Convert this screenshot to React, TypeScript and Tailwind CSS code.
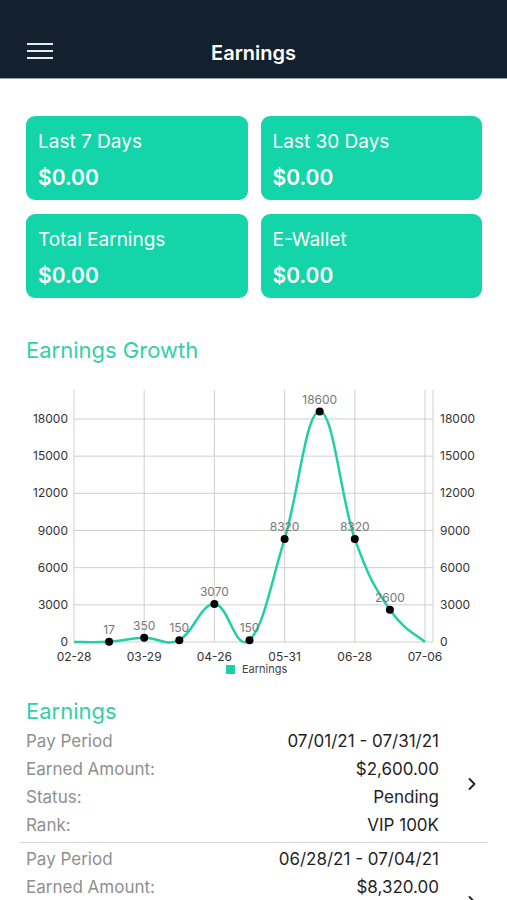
import { ChevronRight } from "lucide-react";

type Pt = { x: number; y: number };

const values = [0, 17, 350, 150, 3070, 150, 8320, 18600, 8320, 2600, 0];
const xLabels = ["02-28", "03-29", "04-26", "05-31", "06-28", "07-06"];
const ticks = [0, 3000, 6000, 9000, 12000, 15000, 18000];

// chart box in svg coords
const LEFT = 74;
const RIGHT = 425;
const AXIS_R = 433;
const ZERO = 261;
const TOP = 9;
const yOf = (v: number) => ZERO - v * ((ZERO - 38) / 18000);
const xOf = (i: number) => LEFT + (i * (RIGHT - LEFT)) / 10;

function cubicPath(pts: Pt[], intensity = 0.2) {
  let d = `M ${pts[0].x} ${pts[0].y}`;
  for (let j = 1; j < pts.length; j++) {
    const prevPrev = pts[Math.max(j - 2, 0)];
    const prev = pts[j - 1];
    const cur = pts[j];
    const next = pts[Math.min(j + 1, pts.length - 1)];
    const pdx = (cur.x - prevPrev.x) * intensity;
    const pdy = (cur.y - prevPrev.y) * intensity;
    const cdx = (next.x - prev.x) * intensity;
    const cdy = (next.y - prev.y) * intensity;
    d += ` C ${prev.x + pdx} ${prev.y + pdy}, ${cur.x - cdx} ${cur.y - cdy}, ${cur.x} ${cur.y}`;
  }
  return d;
}

const summary = [
  { label: "Last 7 Days", amount: "$0.00" },
  { label: "Last 30 Days", amount: "$0.00" },
  { label: "Total Earnings", amount: "$0.00" },
  { label: "E-Wallet", amount: "$0.00" },
];

const periods = [
  {
    rows: [
      ["Pay Period", "07/01/21 - 07/31/21"],
      ["Earned Amount:", "$2,600.00"],
      ["Status:", "Pending"],
      ["Rank:", "VIP 100K"],
    ],
  },
  {
    rows: [
      ["Pay Period", "06/28/21 - 07/04/21"],
      ["Earned Amount:", "$8,320.00"],
      ["Status:", "Paid"],
      ["Rank:", "VIP 100K"],
    ],
  },
];

function GrowthChart() {
  const pts = values.map((v, i) => ({ x: xOf(i), y: yOf(v) }));
  return (
    <svg width="507" height="300" viewBox="0 0 507 300" className="block" fontFamily="Inter, 'Liberation Sans', sans-serif">
      {ticks.map((t) => (
        <line key={t} x1={LEFT} x2={AXIS_R} y1={yOf(t)} y2={yOf(t)} stroke="#cfcfcf" strokeWidth="1" />
      ))}
      {[0, 2, 4, 6, 8, 10].map((i) => (
        <line key={i} x1={xOf(i)} x2={xOf(i)} y1={TOP} y2={ZERO} stroke="#cfcfcf" strokeWidth="1" />
      ))}
      <line x1={AXIS_R} x2={AXIS_R} y1={TOP} y2={ZERO} stroke="#cfcfcf" strokeWidth="1" />

      {ticks.map((t) => (
        <g key={t} fontSize="12" fill="#333">
          <text x="68" y={yOf(t) + 4} textAnchor="end">{t}</text>
          <text x="440" y={yOf(t) + 4}>{t}</text>
        </g>
      ))}
      {xLabels.map((l, k) => (
        <text key={l} x={xOf(k * 2)} y="280" fontSize="12" fill="#333" textAnchor="middle">
          {l}
        </text>
      ))}

      <path d={cubicPath(pts)} fill="none" stroke="#1fd0a6" strokeWidth="2.5" />
      {pts.slice(1, 10).map((p, i) => (
        <g key={i}>
          <circle cx={p.x} cy={p.y} r="4" fill="#000" />
          <text x={p.x} y={p.y - 8} fontSize="12" fill="#777" textAnchor="middle">
            {values[i + 1]}
          </text>
        </g>
      ))}

      <rect x="226" y="284" width="9" height="9" fill="#1fd0a6" />
      <text x="242" y="292" fontSize="11" fill="#444">Earnings</text>
    </svg>
  );
}

export default function App() {
  return (
    <div className="w-[507px] h-[900px] overflow-hidden bg-white font-['Inter','Liberation_Sans',sans-serif]">
      <header className="relative h-[79px] bg-[#13212f] border-b border-[#9aa3ab] flex items-end justify-center pb-[12px]">
        <button className="absolute left-[27px] top-[43px] flex flex-col gap-[5px]">
          <span className="block w-[26px] h-[2px] bg-[#e6ebf0]" />
          <span className="block w-[26px] h-[2px] bg-[#e6ebf0]" />
          <span className="block w-[26px] h-[2px] bg-[#e6ebf0]" />
        </button>
        <h1 className="text-[20px] font-semibold text-white leading-[26px]">Earnings</h1>
      </header>

      <main>
        <div className="grid grid-cols-2 gap-x-[13px] gap-y-[14px] px-[26px] pr-[25px] mt-[37px]">
          {summary.map((s) => (
            <div key={s.label} className="h-[84px] rounded-[9px] bg-[#14d4a9] px-[12px] pt-[13px] text-white">
              <p className="text-[19px] leading-[26px]">{s.label}</p>
              <p className="mt-[10px] text-[21px] font-semibold leading-[26px]">{s.amount}</p>
            </div>
          ))}
        </div>

        <h2 className="mt-[38px] px-[26px] text-[22px] leading-[28px] text-[#33d0a5]">Earnings Growth</h2>

        <div className="mt-[17px]">
          <GrowthChart />
        </div>

        <h2 className="mt-[16px] px-[26px] text-[22px] leading-[28px] text-[#33d0a5]">Earnings</h2>

        <div className="mt-[3px]">
          {periods.map((p, idx) => (
            <div key={idx} className={idx > 0 ? "mx-[20px] border-t border-[#d6d6d6] pt-[3px]" : "mx-[20px] pb-[2px]"}>
              <div className="flex items-center">
                <div className="flex-1 pl-[6px]">
                  {p.rows.map(([label, value]) => (
                    <div key={label} className="flex justify-between h-[28px] items-center text-[17px]">
                      <span className="text-[#8f8f8f]">{label}</span>
                      <span className="text-[#1f1f1f]">{value}</span>
                    </div>
                  ))}
                </div>
                <div className="w-[48px] flex justify-end pr-[5px]">
                  <ChevronRight className="w-[20px] h-[20px] text-[#222]" strokeWidth={2.2} />
                </div>
              </div>
            </div>
          ))}
        </div>
      </main>
    </div>
  );
}
